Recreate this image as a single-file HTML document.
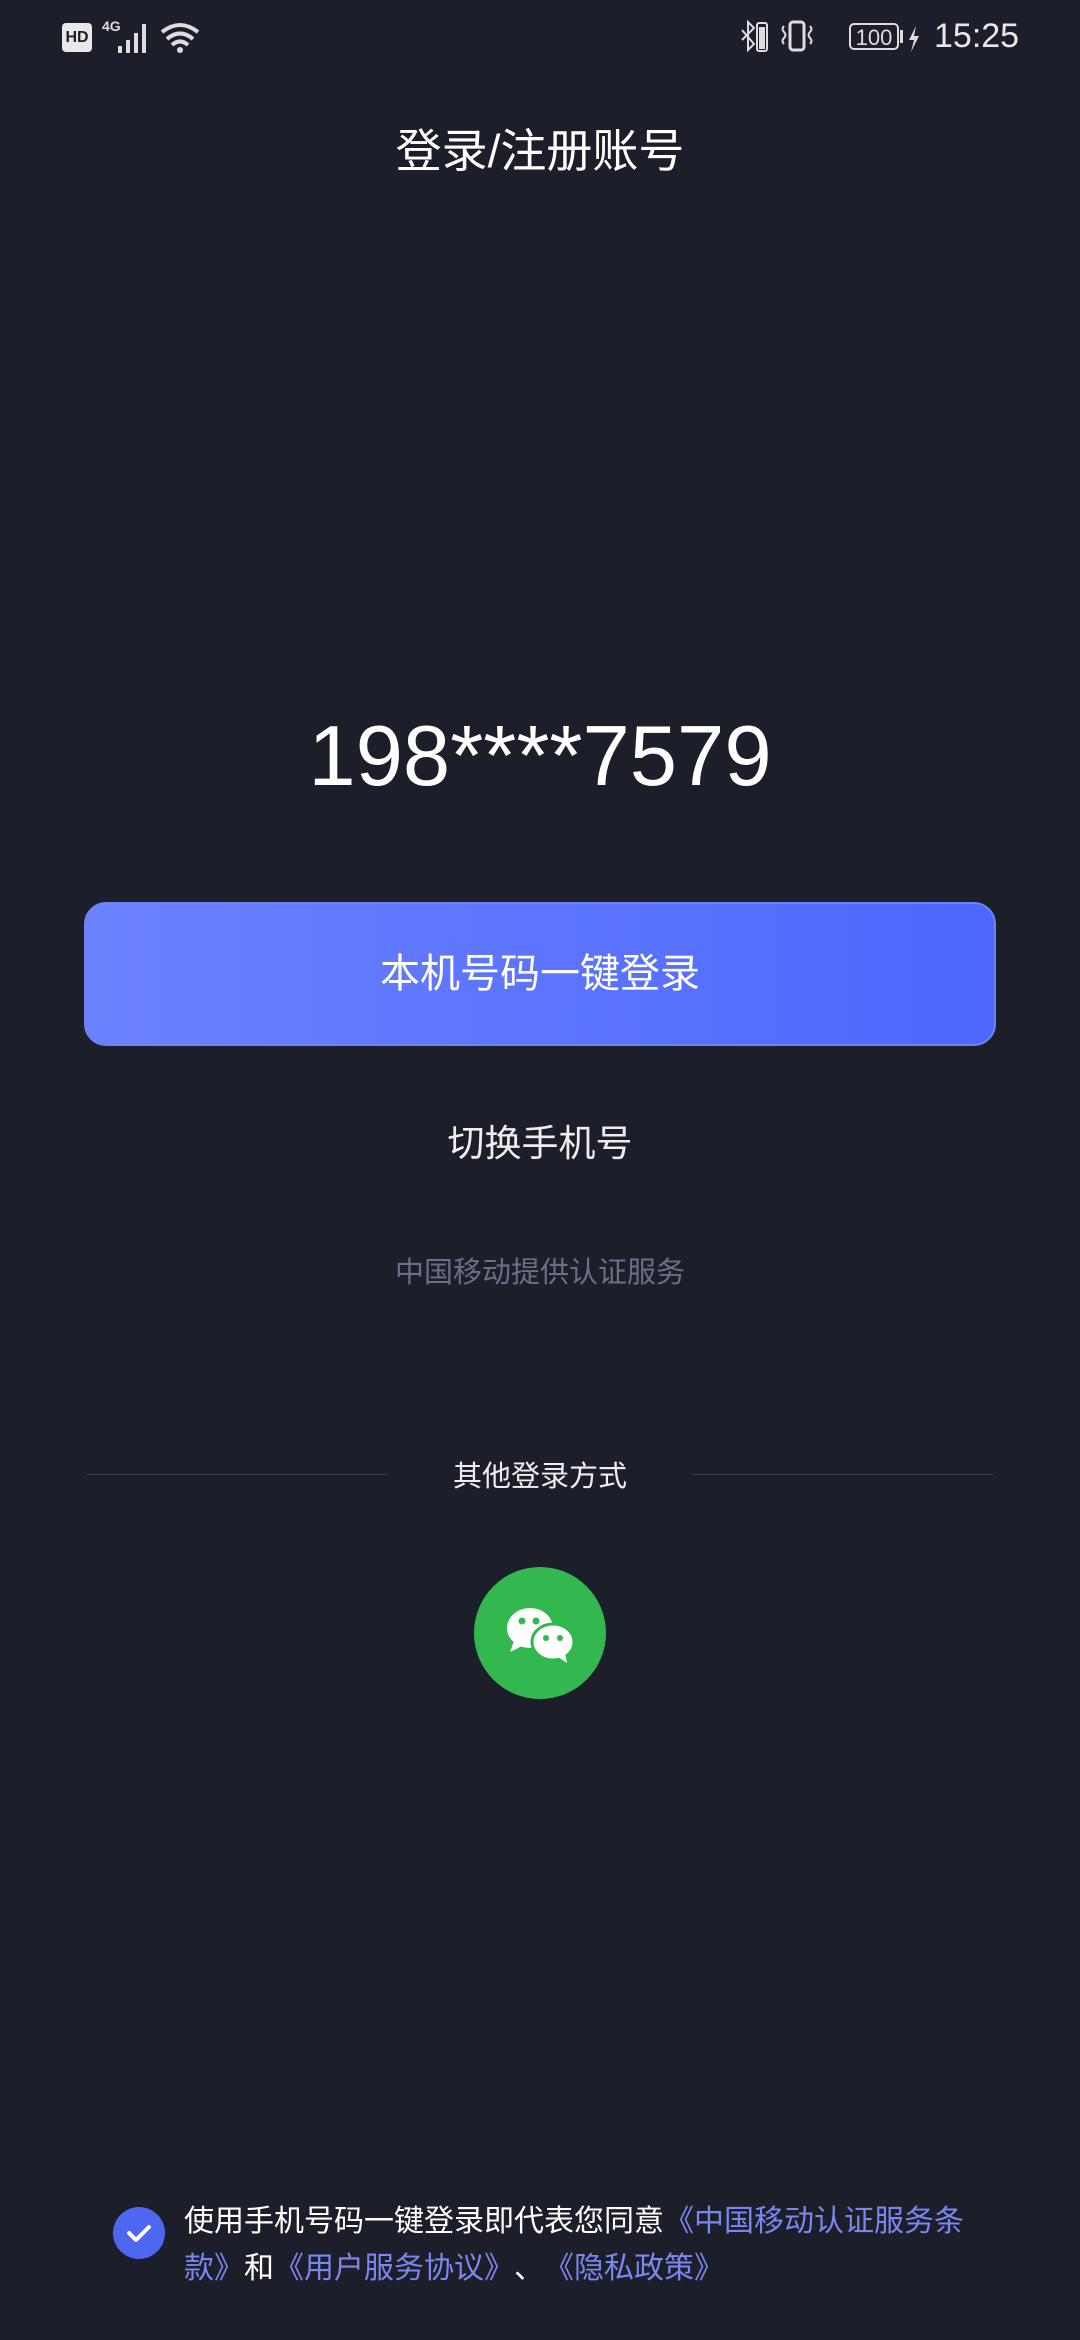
<!DOCTYPE html>
<html><head><meta charset="utf-8"><style>
*{margin:0;padding:0;box-sizing:border-box}
body{width:1080px;height:2340px;background:#1c1e2a;position:relative;overflow:hidden;font-family:"Liberation Sans","Noto Sans CJK SC",sans-serif;color:#fff;font-feature-settings:"chws" 0,"halt" 0,"palt" 0}
.a{position:absolute}
.c{left:0;width:1080px;text-align:center}
.p{display:inline-block;width:30px;text-align:center}
</style></head><body>
<div class="a" style="left:62px;top:23px;width:30px;height:29px;background:#e8e8e8;border-radius:4px;color:#1c1e2a;font-size:16px;font-weight:bold;text-align:center;line-height:29px">HD</div>
<div class="a" style="left:102px;top:18px;font-size:14px;font-weight:bold;color:#ddd">4G</div>
<svg class="a" style="left:100px;top:20px" width="100" height="36">
<rect x="18" y="26" width="4" height="7" fill="#ddd"/><rect x="26" y="20" width="4" height="13" fill="#ddd"/><rect x="34" y="13" width="4" height="20" fill="#ddd"/><rect x="42" y="4" width="4" height="29" fill="#ddd"/>
<path d="M62 12 Q80 -2 98 12" stroke="#ddd" stroke-width="4" fill="none"/><path d="M67 19 Q80 8 93 19" stroke="#ddd" stroke-width="4" fill="none"/><path d="M72 25 Q80 18 88 25" stroke="#ddd" stroke-width="4" fill="none"/><circle cx="80" cy="30" r="3" fill="#ddd"/>
</svg>
<svg class="a" style="left:740px;top:18px" width="200" height="40">
<path d="M2 12 L14 26 L8 32 L8 4 L14 10 L2 22" stroke="#ddd" stroke-width="2" fill="none"/>
<rect x="17" y="5" width="10" height="28" rx="2" stroke="#ddd" stroke-width="2" fill="none"/><rect x="19" y="9" width="6" height="22" fill="#ddd"/>
<rect x="50" y="4" width="14" height="28" rx="3" stroke="#ddd" stroke-width="3" fill="none"/>
<path d="M44 8 q-3 3 0 6 q3 3 0 6 q-3 3 0 6" stroke="#ddd" stroke-width="2" fill="none"/><path d="M70 8 q3 3 0 6 q-3 3 0 6 q3 3 0 6" stroke="#ddd" stroke-width="2" fill="none"/>
<rect x="110" y="6" width="48" height="25" rx="4" stroke="#ddd" stroke-width="2" fill="none"/>
<text x="134" y="27" font-size="22" fill="#ddd" text-anchor="middle" font-family="Liberation Sans">100</text>
<rect x="160" y="12" width="3" height="13" fill="#ddd"/>
<path d="M176 8 L169 22 L174 22 L171 34 L179 18 L174 18 Z" fill="#ddd"/>
</svg>
<div class="a" style="left:934px;top:17px;font-size:34px;color:#e8e8e8">15:25</div>

<div class="a c" style="top:122px;font-size:46px;line-height:58px">登录/注册账号</div>
<div class="a c" style="top:708px;font-size:85px;line-height:98px">198****7579</div>
<div class="a" style="left:84px;top:902px;width:912px;height:144px;border-radius:22px;background:linear-gradient(90deg,#6b82ff,#4e67fd);border:2px solid #6d84f5;text-align:center;line-height:140px;font-size:40px">本机号码一键登录</div>
<div class="a c" style="top:1120px;font-size:37px;line-height:48px;color:#eee">切换手机号</div>
<div class="a c" style="top:1254px;font-size:29px;line-height:38px;color:#6c6f82">中国移动提供认证服务</div>
<div class="a" style="left:87px;top:1474px;width:300px;height:1px;background:#3c3f4d"></div>
<div class="a" style="left:692px;top:1474px;width:301px;height:1px;background:#3c3f4d"></div>
<div class="a c" style="top:1458px;font-size:29px;line-height:38px;color:#eee">其他登录方式</div>
<svg class="a" style="left:474px;top:1567px" width="132" height="132">
<circle cx="66" cy="66" r="66" fill="#33b74f"/>
<ellipse cx="56" cy="61" rx="23" ry="20" fill="#fff"/><path d="M40 74 L36 85 L50 78 Z" fill="#fff"/>
<ellipse cx="79" cy="75" rx="21" ry="18" stroke="#33b74f" stroke-width="3" fill="#fff"/><path d="M84 90 L93 96 L91 86 Z" fill="#fff"/>
<circle cx="48" cy="54" r="3.5" fill="#33b74f"/><circle cx="62" cy="54" r="3.5" fill="#33b74f"/>
<circle cx="72" cy="71" r="3" fill="#33b74f"/><circle cx="86" cy="71" r="3" fill="#33b74f"/>
</svg>
<svg class="a" style="left:112px;top:2206px" width="54" height="54"><circle cx="27" cy="27" r="26" fill="#4e67f0"/><path d="M17 27 L24 34 L37 21" stroke="#fff" stroke-width="4" fill="none" stroke-linecap="round" stroke-linejoin="round"/></svg>
<div class="a" style="left:184px;top:2198px;width:800px;font-size:30px;line-height:47px;color:#fff">使用手机号码一键登录即代表您同意<span style="color:#7b86ee"><span class="p">《</span>中国移动认证服务条款<span class="p">》</span></span>和<span style="color:#7b86ee"><span class="p">《</span>用户服务协议<span class="p">》</span></span><span class="p">、</span><span style="color:#7b86ee"><span class="p">《</span>隐私政策<span class="p">》</span></span></div>
</body></html>
